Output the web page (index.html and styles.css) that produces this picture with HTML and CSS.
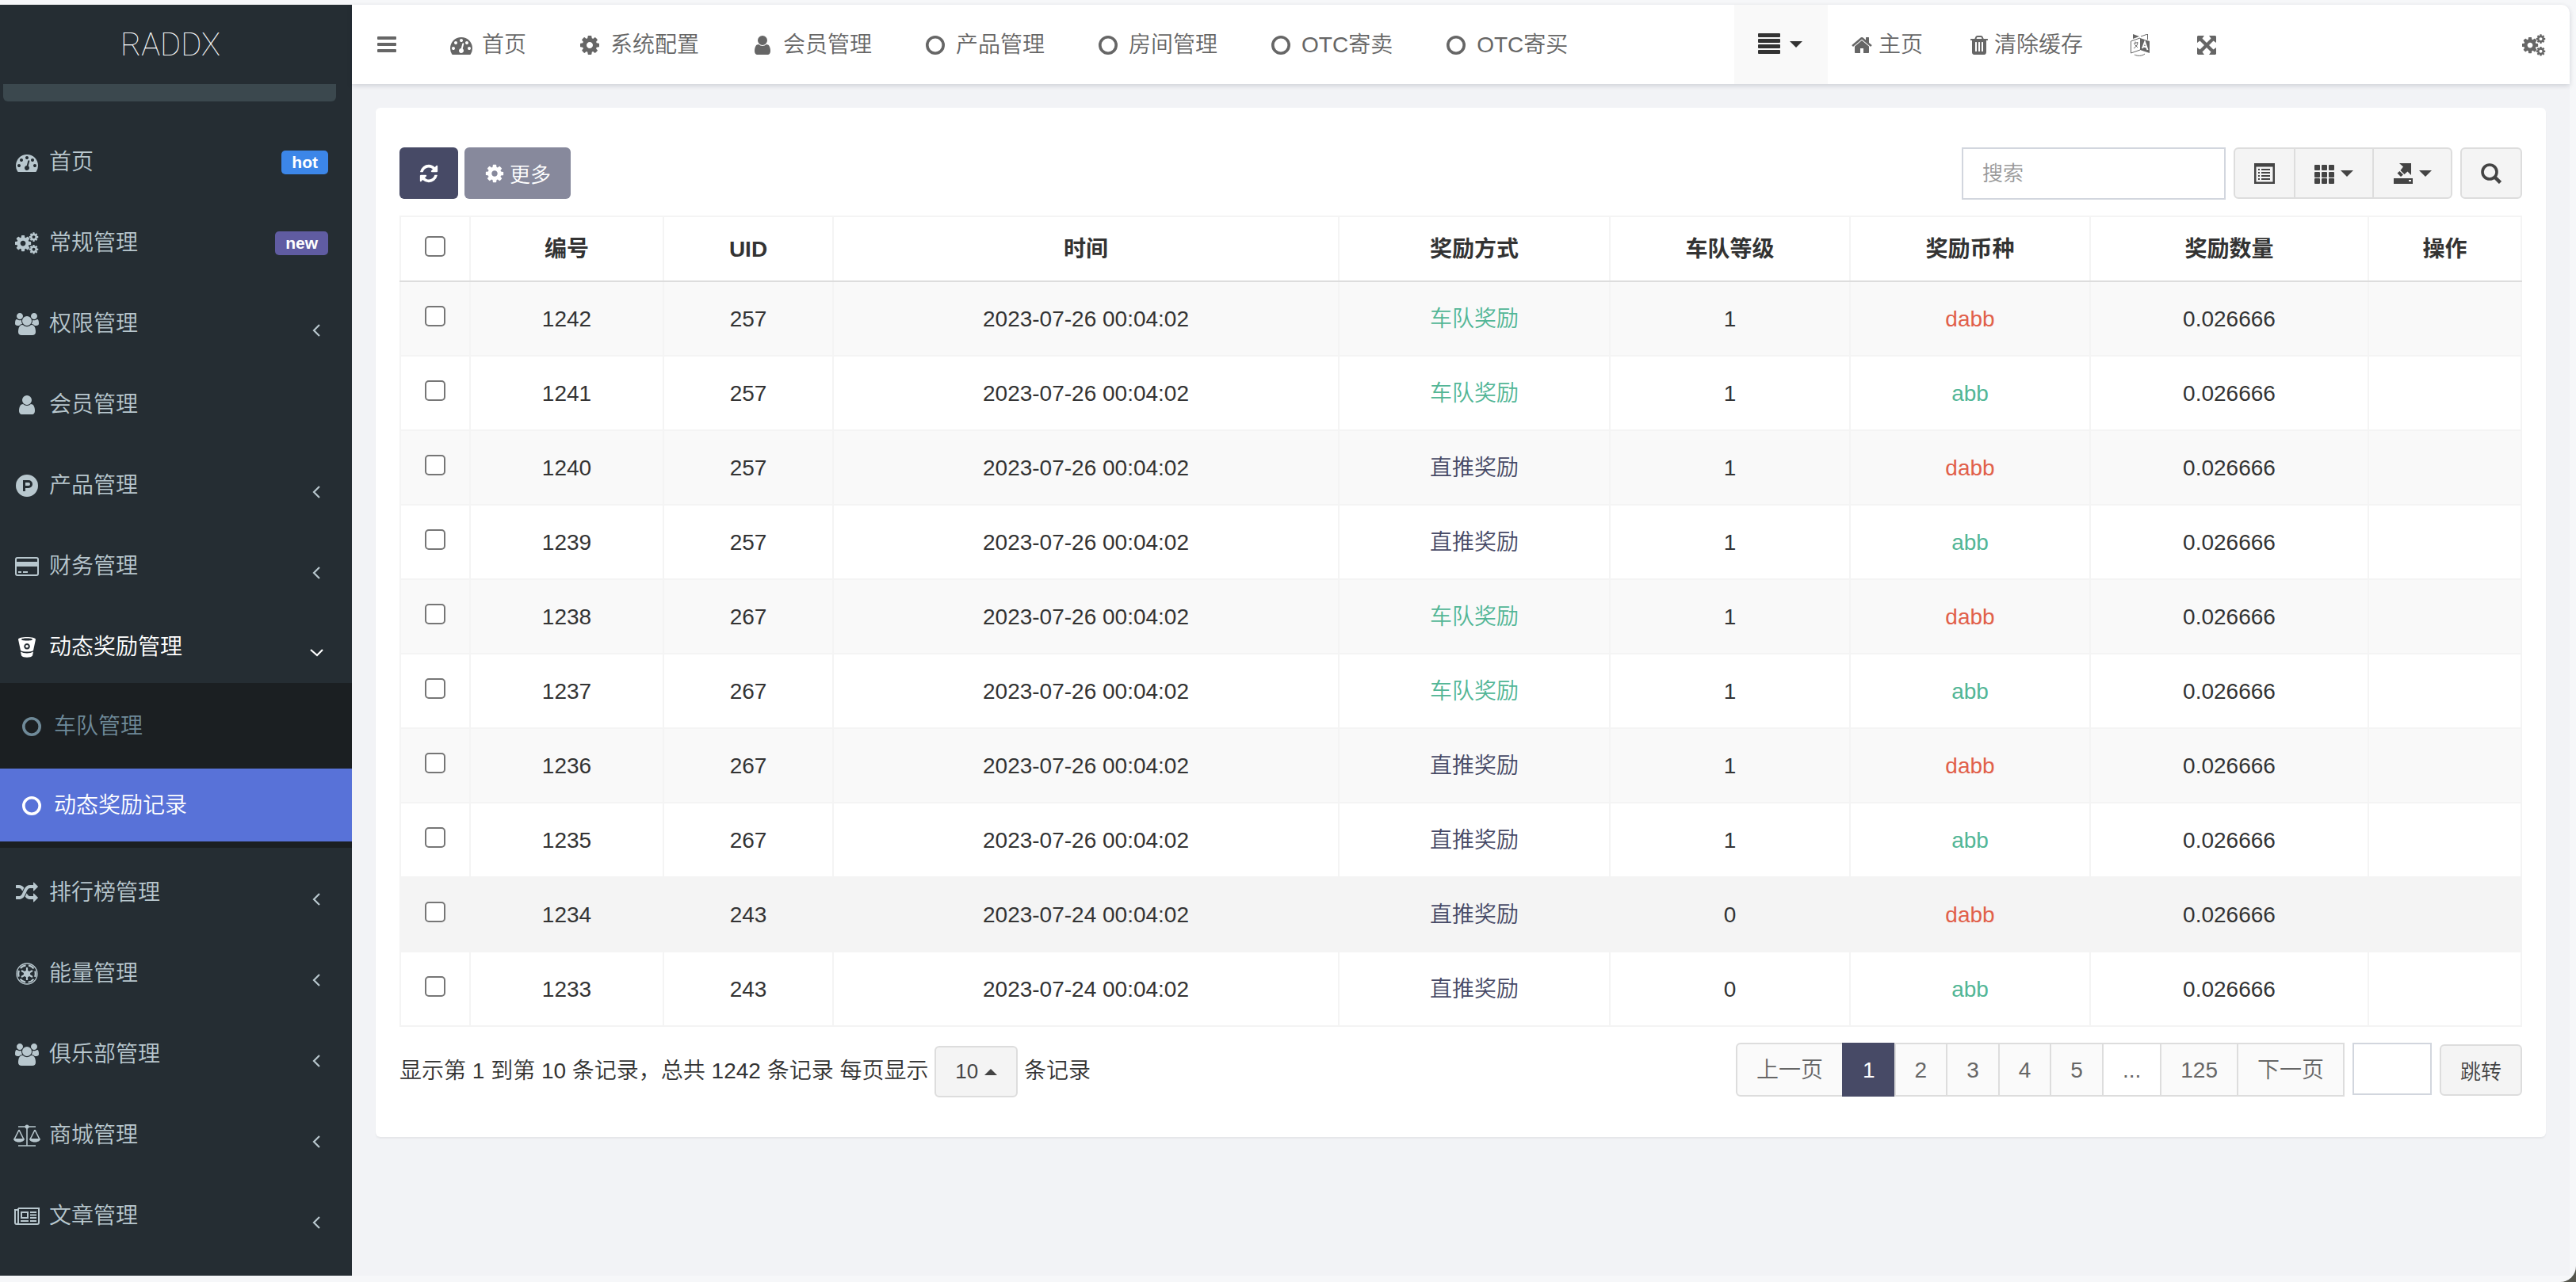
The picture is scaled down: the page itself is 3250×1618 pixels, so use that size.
FILE: index.html
```html
<!DOCTYPE html>
<html lang="zh-CN">
<head>
<meta charset="utf-8">
<title>RADDX</title>
<link rel="stylesheet" href="styles.css">
</head>
<body>
<svg class="sprite" aria-hidden="true">
  <symbol id="dash" viewBox="0 0 1792 1792"><path d="M384 1152q0-53-37.500-90.500t-90.500-37.500-90.500 37.500-37.500 90.500 37.500 90.500 90.500 37.500 90.500-37.500 37.500-90.500zm192-448q0-53-37.500-90.500t-90.500-37.500-90.500 37.500-37.500 90.500 37.500 90.500 90.500 37.500 90.500-37.500 37.500-90.500zm428 481l101-382q6-26-7.500-48.500t-38.500-29.500-48 6.500-30 39.500l-101 382q-60 5-107 43.500t-63 98.500q-20 77 20 146t117 89 146-20 89-117q16-60-6-117t-72-91zm660-33q0-53-37.500-90.500t-90.500-37.500-90.500 37.500-37.500 90.500 37.500 90.500 90.500 37.500 90.500-37.500 37.500-90.500zm-640-640q0-53-37.500-90.500t-90.500-37.500-90.500 37.500-37.500 90.500 37.500 90.500 90.500 37.500 90.500-37.500 37.500-90.500zm448 192q0-53-37.500-90.500t-90.500-37.500-90.500 37.500-37.500 90.500 37.500 90.500 90.500 37.500 90.500-37.500 37.500-90.500zm320 448q0 261-141 483-19 29-54 29h-1402q-35 0-54-29-141-221-141-483 0-182 71-348t191-286 286-191 348-71 348 71 286 191 191 286 71 348z"/></symbol>
  <symbol id="cog" viewBox="0 0 1792 1792"><path id="cog-shape" d="M1152 896q0-106-75-181t-181-75-181 75-75 181 75 181 181 75 181-75 75-181zm512-109v222q0 12-8 23t-20 13l-185 28q-19 54-39 91 35 50 107 138 10 12 10 25t-9 23q-27 37-99 108t-94 71q-12 0-26-9l-138-108q-44 23-91 38-16 136-29 186-7 28-36 28h-222q-14 0-24.500-8.500t-11.500-21.500l-28-184q-49-16-90-37l-141 107q-10 9-25 9-14 0-25-11-126-114-165-168-7-10-7-23 0-12 8-23 15-21 51-66.500t54-70.500q-27-50-41-99l-183-27q-13-2-21-12.500t-8-23.500v-222q0-12 8-23t19-13l186-28q14-46 39-92-40-57-107-138-10-12-10-24 0-10 9-23 26-36 98.500-107.500t94.500-71.500q13 0 26 10l138 107q44-23 91-38 16-136 29-186 7-28 36-28h222q14 0 24.500 8.500t11.500 21.500l28 184q49 16 90 37l142-107q9-9 24-9 13 0 25 10 129 119 165 170 7 8 7 22 0 12-8 23-15 21-51 66.500t-54 70.500q26 50 41 98l183 28q13 2 21 12.500t8 23.500z"/></symbol>
  <symbol id="cogs" viewBox="0 0 30 28"><use href="#cog-shape" transform="translate(-1.800 2.200) scale(.0132)"/><use href="#cog-shape" transform="translate(16.800 -.6) scale(.0075)"/><use href="#cog-shape" transform="translate(16.800 15) scale(.0075)"/></symbol>
  <symbol id="user" viewBox="0 0 1792 1792"><path d="M1536 1399q0 109-62.500 187t-150.500 78h-854q-88 0-150.500-78t-62.500-187q0-85 8.500-160.500t31.500-152 58.500-131 94-89 134.500-34.500q131 128 313 128t313-128q76 0 134.500 34.500t94 89 58.500 131 31.500 152 8.500 160.500zm-256-887q0 159-112.500 271.500t-271.500 112.500-271.500-112.500-112.500-271.500 112.500-271.500 271.500-112.500 271.500 112.500 112.500 271.500z"/></symbol>
  <symbol id="group" viewBox="-64 0 1920 1792"><path d="M529 896q-162 5-265 128h-134q-82 0-138-40.500t-56-118.500q0-353 124-353 6 0 43.500 21t97.500 42.500 119 21.500q67 0 133-23-5 37-5 66 0 139 81 256zm1071 637q0 120-73 189.500t-194 69.500h-874q-121 0-194-69.500t-73-189.500q0-53 3.500-103.500t14-109 26.500-108.500 43-97.500 62-81 85.500-53.500 111.500-20q10 0 43 21.500t73 48 107 48 135 21.500 135-21.500 107-48 73-48 43-21.500q61 0 111.500 20t85.500 53.500 62 81 43 97.500 26.500 108.500 14 109 3.500 103.500zm-1024-1277q0 106-75 181t-181 75-181-75-75-181 75-181 181-75 181 75 75 181zm704 384q0 159-112.500 271.500t-271.500 112.500-271.500-112.500-112.500-271.500 112.500-271.500 271.500-112.500 271.500 112.500 112.500 271.500zm576 225q0 78-56 118.500t-138 40.500h-134q-103-123-265-128 81-117 81-256 0-29-5-66 66 23 133 23 59 0 119-21.500t97.500-42.500 43.500-21q124 0 124 353zm-128-609q0 106-75 181t-181 75-181-75-75-181 75-181 181-75 181 75 75 181z"/></symbol>
  <symbol id="home" viewBox="64 0 1664 1792"><path d="M1472 992v480q0 26-19 45t-45 19h-384v-384h-256v384h-384q-26 0-45-19t-19-45v-480q0-1 .5-3t.5-3l575-474 575 474q1 2 1 6zm223-69l-62 74q-8 9-21 11h-3q-13 0-21-7l-692-577-692 577q-12 8-24 7-13-2-21-11l-62-74q-8-10-7-23.500t11-21.500l719-599q32-26 76-26t76 26l244 204v-195q0-14 9-23t23-9h192q14 0 23 9t9 23v408l219 182q10 8 11 21.500t-7 23.500z"/></symbol>
  <symbol id="trash" viewBox="192 0 1408 1792"><path d="M704 1376v-704q0-14-9-23t-23-9h-64q-14 0-23 9t-9 23v704q0 14 9 23t23 9h64q14 0 23-9t9-23zm256 0v-704q0-14-9-23t-23-9h-64q-14 0-23 9t-9 23v704q0 14 9 23t23 9h64q14 0 23-9t9-23zm256 0v-704q0-14-9-23t-23-9h-64q-14 0-23 9t-9 23v704q0 14 9 23t23 9h64q14 0 23-9t9-23zm-544-992h448l-48-117q-7-9-17-11h-317q-10 2-17 11zm928 32v64q0 14-9 23t-23 9h-96v948q0 83-47 143.500t-113 60.500h-832q-66 0-113-58.500t-47-141.500v-952h-96q-14 0-23-9t-9-23v-64q0-14 9-23t23-9h309l70-167q15-37 54-63t79-26h320q40 0 79 26t54 63l70 167h309q14 0 23 9t9 23z"/></symbol>
  <symbol id="refresh" viewBox="0 0 1792 1792"><path d="M1639 1056q0 5-1 7-64 268-268 434.500t-478 166.500q-146 0-282.500-55t-243.500-157l-129 129q-19 19-45 19t-45-19-19-45v-448q0-26 19-45t45-19h448q26 0 45 19t19 45-19 45l-137 137q71 66 161 102t187 36q134 0 250-65t186-179q11-17 53-117 8-23 30-23h192q13 0 22.500 9.500t9.500 22.500zm25-800v448q0 26-19 45t-45 19h-448q-26 0-45-19t-19-45 19-45l138-138q-148-137-349-137-134 0-250 65t-186 179q-11 17-53 117-8 23-30 23h-199q-13 0-22.500-9.500t-9.500-22.500v-7q65-268 270-434.500t480-166.500q146 0 284 55.500t245 156.500l130-129q19-19 45-19t45 19 19 45z"/></symbol>
  <symbol id="random" viewBox="0 0 1792 1792"><path d="M666 481q-60 92-137 273-22-45-37-72.500t-40.500-63.500-51-56.500-63-35-81.500-14.500h-224q-14 0-23-9t-9-23v-192q0-14 9-23t23-9h224q250 0 410 225zm1126 799q0 14-9 23l-320 320q-9 9-23 9-13 0-22.500-9.500t-9.500-22.500v-192q-32 0-85 .5t-81 1-73-1-71-5-64-10.500-63-18.500-58-28.500-59-40-55-53.500-56-69.500q59-93 136-273 22 45 37 72.500t40.500 63.500 51 56.500 63 35 81.500 14.500h256v-192q0-14 9-23t23-9q12 0 24 10l319 319q9 9 9 23zm0-896q0 14-9 23l-320 320q-9 9-23 9-13 0-22.500-9.500t-9.500-22.500v-192h-256q-48 0-87 15t-69 45-51 61.500-45 77.500q-32 62-78 171-29 66-49.500 111t-54 105-64 100-74 83-90 68.500-106.500 42-128 16.500h-224q-14 0-23-9t-9-23v-192q0-14 9-23t23-9h224q48 0 87-15t69-45 51-61.500 45-77.500q32-62 78-171 29-66 49.500-111t54-105 64-100 74-83 90-68.500 106.500-42 128-16.500h256v-192q0-14 9-23t23-9q12 0 24 10l319 319q9 9 9 23z"/></symbol>
  <symbol id="ring" viewBox="0 0 28 28"><circle cx="14" cy="14" r="10.200" fill="none" stroke="currentColor" stroke-width="3.600"/></symbol>
  <symbol id="product" viewBox="0 0 28 28"><path fill-rule="evenodd" d="M14 0a14 14 0 1 0 0 28a14 14 0 1 0 0-28zM9 7h7a5 5 0 0 1 0 10h-4v4h-3zM12 10v4h4a2 2 0 0 0 0-4z"/></symbol>
  <symbol id="card" viewBox="0 0 30 28"><path fill-rule="evenodd" d="M3 2h24a3 3 0 0 1 3 3v18a3 3 0 0 1-3 3h-24a3 3 0 0 1-3-3v-18a3 3 0 0 1 3-3zM3 4a1 1 0 0 0-1 1v3h26v-3a1 1 0 0 0-1-1zM2 14v9a1 1 0 0 0 1 1h24a1 1 0 0 0 1-1v-9zM4 20h4v2h-4zM10 20h6v2h-6z"/></symbol>
  <symbol id="bucket" viewBox="0 0 28 28"><path fill-rule="evenodd" d="M3 4c0-4 22-4 22 0l-3 14c-3 2-13 2-16 0zM7 4c0 2 14 2 14 0s-14-2-14 0zM14 9a3.800 3.800 0 1 0 .1 0z"/><circle cx="14" cy="12.800" r="1.800"/><path d="M6 19.500c4 2.500 12 2.500 16 0l-1 5c-2 3-12 3-14 0z"/></symbol>
  <symbol id="empire" viewBox="0 0 28 28"><circle cx="14" cy="14" r="13" fill="none" stroke="currentColor" stroke-width="1.300"/><circle cx="14" cy="14" r="10.800" fill="none" stroke="currentColor" stroke-width="2.200" stroke-dasharray="7.800 3.500" stroke-dashoffset="3.900"/><circle cx="14" cy="14" r="4.200"/><path d="M14 6v16M7 10l14 8M7 18l14-8" stroke="currentColor" stroke-width="2.200"/></symbol>
  <symbol id="scales" viewBox="0 0 34 28"><path d="M6 3h22M6 27h22M17 3v24M7 7l-6 12M7 7l6 12M27 7l-6 12M27 7l6 12" fill="none" stroke="currentColor" stroke-width="1.600"/><circle cx="17" cy="3" r="2.500"/><path d="M0 18h14c0 6-14 6-14 0zM20 18h14c0 6-14 6-14 0z"/></symbol>
  <symbol id="news" viewBox="0 0 32 28"><path d="M5 4h26v18a2 2 0 0 1-2 2h-26a2 2 0 0 1-2-2v-16h4M5 4v18a2 2 0 0 1-2 2M9 9h8v7h-8zM20 9h8M20 12.500h8M20 16h8M8 20h10M20 20h8" fill="none" stroke="currentColor" stroke-width="2"/></symbol>
  <symbol id="left" viewBox="0 0 30 40"><path d="M19 21l-7 7 7 7" fill="none" stroke="currentColor" stroke-width="2.200"/></symbol>
  <symbol id="down" viewBox="0 0 30 40"><path d="M8 23l8 7 7-7" fill="none" stroke="currentColor" stroke-width="2.200"/></symbol>
  <symbol id="bars" viewBox="0 0 24 28"><rect y="4" width="24" height="4" rx="1"/><rect y="12" width="24" height="4" rx="1"/><rect y="20" width="24" height="4" rx="1"/></symbol>
  <symbol id="lines" viewBox="0 0 28 28"><rect width="28" height="5" rx="1"/><rect y="7" width="28" height="5" rx="1"/><rect y="14" width="28" height="5" rx="1"/><rect y="21" width="28" height="5" rx="1"/></symbol>
  <symbol id="lang" viewBox="0 0 24 28"><path d="M3 0l8 3-8 3zM12 5l12 4v15l-12-4z"/><path d="M12 5l-11.500 4v15l11.500-4M13 3l8.500-3v7M4 12l5-1.500c0 4-3 6-5 7.500M5 13l4 4M6 9.500v2M5 26c4 2 9 2 13-1" fill="none" stroke="currentColor"/><path d="M15 18l3-8 3.500 10M16 15.500l4 1" fill="none" stroke="#fff" stroke-width="2"/></symbol>
  <symbol id="expand" viewBox="0 0 24 28"><path d="M1 2h8l-2.500 3.500 5.500 5.500 5.500-5.500-2.500-3.500h8l1 1v8l-3.500-2.500-5.500 5.500 5.500 5.500 3.500-2.500v8l-1 1h-8l2.500-3.500-5.500-5.500-5.500 5.500 2.500 3.500h-8l-1-1v-8l3.500 2.500 5.500-5.500-5.500-5.500-3.500 2.500v-8z"/></symbol>
  <symbol id="list" viewBox="0 0 26 26"><path fill-rule="evenodd" d="M0 0h26v26h-26zM2.500 4.500v19h21v-19z"/><path d="M5 8h2M9 8h11M5 12h2M9 12h11M5 16h2M9 16h11M5 20h2M9 20h11" stroke="currentColor" stroke-width="2"/></symbol>
  <symbol id="grid" viewBox="0 0 26 26"><g id="grid-row"><rect y="2" width="7" height="7" rx="1"/><rect x="9" y="2" width="7" height="7" rx="1"/><rect x="18" y="2" width="7" height="7" rx="1"/></g><use href="#grid-row" y="9"/><use href="#grid-row" y="17"/></symbol>
  <symbol id="export" viewBox="0 0 26 26"><path d="M8 0h15v15l-4.500-4.500-4 3.500-5-5 3.500-4.500zM5.500 12.500l3-2.500 4.500 4.500-3 2.500z"/><path fill-rule="evenodd" d="M1 19h24v7h-24zM20 21v2h3v-2z"/></symbol>
  <symbol id="search" viewBox="0 0 26 26"><circle cx="11" cy="11" r="9" fill="none" stroke="currentColor" stroke-width="3.600"/><path d="M17 17l7.500 7.500" stroke="currentColor" stroke-width="4.500"/></symbol>
</svg>

<div class="app">
  <aside class="sidebar">
    <a class="logo" href="#">RADDX</a>
    <div class="user-panel"></div>
    <ul class="menu">
      <li><a href="#"><span class="icon"><svg><use href="#dash"/></svg></span>首页<span class="badge badge-blue">hot</span></a></li>
      <li><a href="#"><span class="icon"><svg class="w30"><use href="#cogs"/></svg></span>常规管理<span class="badge badge-purple">new</span></a></li>
      <li><a href="#"><span class="icon"><svg class="w30"><use href="#group"/></svg></span>权限管理<svg class="arrow"><use href="#left"/></svg></a></li>
      <li><a href="#"><span class="icon"><svg><use href="#user"/></svg></span>会员管理</a></li>
      <li><a href="#"><span class="icon"><svg><use href="#product"/></svg></span>产品管理<svg class="arrow"><use href="#left"/></svg></a></li>
      <li><a href="#"><span class="icon"><svg class="w30"><use href="#card"/></svg></span>财务管理<svg class="arrow"><use href="#left"/></svg></a></li>
      <li class="open"><a href="#"><span class="icon"><svg><use href="#bucket"/></svg></span>动态奖励管理<svg class="arrow"><use href="#down"/></svg></a>
        <ul class="submenu">
          <li><a href="#"><span class="icon"><svg><use href="#ring"/></svg></span>车队管理</a></li>
          <li><a class="current" href="#"><span class="icon"><svg><use href="#ring"/></svg></span>动态奖励记录</a></li>
        </ul>
      </li>
      <li><a href="#"><span class="icon"><svg><use href="#random"/></svg></span>排行榜管理<svg class="arrow"><use href="#left"/></svg></a></li>
      <li><a href="#"><span class="icon"><svg><use href="#empire"/></svg></span>能量管理<svg class="arrow"><use href="#left"/></svg></a></li>
      <li><a href="#"><span class="icon"><svg class="w30"><use href="#group"/></svg></span>俱乐部管理<svg class="arrow"><use href="#left"/></svg></a></li>
      <li><a href="#"><span class="icon"><svg class="w34"><use href="#scales"/></svg></span>商城管理<svg class="arrow"><use href="#left"/></svg></a></li>
      <li><a href="#"><span class="icon"><svg class="w32"><use href="#news"/></svg></span>文章管理<svg class="arrow"><use href="#left"/></svg></a></li>
    </ul>
  </aside>

  <div class="main">
    <header class="topbar">
      <button class="toggle" type="button" aria-label="切换菜单"><svg class="w24"><use href="#bars"/></svg></button>
      <nav class="tabs">
        <a href="#"><span class="icon"><svg><use href="#dash"/></svg></span>首页</a>
        <a href="#"><span class="icon"><svg><use href="#cog"/></svg></span>系统配置</a>
        <a href="#"><span class="icon"><svg><use href="#user"/></svg></span>会员管理</a>
        <a href="#"><span class="icon"><svg><use href="#ring"/></svg></span>产品管理</a>
        <a href="#"><span class="icon"><svg><use href="#ring"/></svg></span>房间管理</a>
        <a href="#"><span class="icon"><svg><use href="#ring"/></svg></span>OTC寄卖</a>
        <a href="#"><span class="icon"><svg><use href="#ring"/></svg></span>OTC寄买</a>
      </nav>
      <div class="tools">
        <button class="more-tabs" type="button" aria-label="更多标签"><svg><use href="#lines"/></svg><i class="caret"></i></button>
        <a href="#"><svg class="w26"><use href="#home"/></svg>主页</a>
        <a href="#"><svg class="w22"><use href="#trash"/></svg>清除缓存</a>
        <a href="#" aria-label="语言"><svg class="w24"><use href="#lang"/></svg></a>
        <a href="#" aria-label="全屏"><svg class="w24"><use href="#expand"/></svg></a>
        <a class="settings" href="#" aria-label="设置"><svg class="w30"><use href="#cogs"/></svg></a>
      </div>
    </header>

    <main class="content">
      <section class="card">
        <div class="toolbar">
          <button class="btn btn-primary" type="button" aria-label="刷新"><svg class="s26"><use href="#refresh"/></svg></button>
          <button class="btn btn-primary btn-muted" type="button"><svg class="s26"><use href="#cog"/></svg>更多</button>
          <input class="search" type="text" placeholder="搜索" aria-label="搜索">
          <div class="btn-group">
            <button class="btn" type="button" aria-label="切换视图"><svg class="s26"><use href="#list"/></svg></button>
            <button class="btn" type="button" aria-label="列"><svg class="s26"><use href="#grid"/></svg><i class="caret"></i></button>
            <button class="btn" type="button" aria-label="导出"><svg class="s26"><use href="#export"/></svg><i class="caret"></i></button>
          </div>
          <button class="btn" type="button" aria-label="普通搜索"><svg class="s26"><use href="#search"/></svg></button>
        </div>

        <table class="records">
          <colgroup><col class="c-check"><col class="c-id"><col class="c-uid"><col><col class="c-type"><col class="c-level"><col class="c-level"><col class="c-amount"><col class="c-action"></colgroup>
          <thead>
            <tr><th><input type="checkbox" aria-label="全选"></th><th>编号</th><th>UID</th><th>时间</th><th>奖励方式</th><th>车队等级</th><th>奖励币种</th><th>奖励数量</th><th>操作</th></tr>
          </thead>
          <tbody>
            <tr><td><input type="checkbox" aria-label="选择 1242"></td><td>1242</td><td>257</td><td>2023-07-26 00:04:02</td><td class="green">车队奖励</td><td>1</td><td class="red">dabb</td><td>0.026666</td><td></td></tr>
            <tr><td><input type="checkbox" aria-label="选择 1241"></td><td>1241</td><td>257</td><td>2023-07-26 00:04:02</td><td class="green">车队奖励</td><td>1</td><td class="green">abb</td><td>0.026666</td><td></td></tr>
            <tr><td><input type="checkbox" aria-label="选择 1240"></td><td>1240</td><td>257</td><td>2023-07-26 00:04:02</td><td class="navy">直推奖励</td><td>1</td><td class="red">dabb</td><td>0.026666</td><td></td></tr>
            <tr><td><input type="checkbox" aria-label="选择 1239"></td><td>1239</td><td>257</td><td>2023-07-26 00:04:02</td><td class="navy">直推奖励</td><td>1</td><td class="green">abb</td><td>0.026666</td><td></td></tr>
            <tr><td><input type="checkbox" aria-label="选择 1238"></td><td>1238</td><td>267</td><td>2023-07-26 00:04:02</td><td class="green">车队奖励</td><td>1</td><td class="red">dabb</td><td>0.026666</td><td></td></tr>
            <tr><td><input type="checkbox" aria-label="选择 1237"></td><td>1237</td><td>267</td><td>2023-07-26 00:04:02</td><td class="green">车队奖励</td><td>1</td><td class="green">abb</td><td>0.026666</td><td></td></tr>
            <tr><td><input type="checkbox" aria-label="选择 1236"></td><td>1236</td><td>267</td><td>2023-07-26 00:04:02</td><td class="navy">直推奖励</td><td>1</td><td class="red">dabb</td><td>0.026666</td><td></td></tr>
            <tr><td><input type="checkbox" aria-label="选择 1235"></td><td>1235</td><td>267</td><td>2023-07-26 00:04:02</td><td class="navy">直推奖励</td><td>1</td><td class="green">abb</td><td>0.026666</td><td></td></tr>
            <tr class="hovered"><td><input type="checkbox" aria-label="选择 1234"></td><td>1234</td><td>243</td><td>2023-07-24 00:04:02</td><td class="navy">直推奖励</td><td>0</td><td class="red">dabb</td><td>0.026666</td><td></td></tr>
            <tr><td><input type="checkbox" aria-label="选择 1233"></td><td>1233</td><td>243</td><td>2023-07-24 00:04:02</td><td class="navy">直推奖励</td><td>0</td><td class="green">abb</td><td>0.026666</td><td></td></tr>
          </tbody>
        </table>

        <div class="table-footer">
          <div class="summary">显示第 1 到第 10 条记录，总共 1242 条记录 每页显示 <button class="btn page-size" type="button">10<i class="caret caret-up"></i></button> 条记录</div>
          <ul class="pagination">
            <li><a href="#">上一页</a></li>
            <li><a class="active" href="#">1</a></li>
            <li><a href="#">2</a></li>
            <li><a href="#">3</a></li>
            <li><a href="#">4</a></li>
            <li><a href="#">5</a></li>
            <li><a class="dots" href="#">...</a></li>
            <li><a href="#">125</a></li>
            <li><a href="#">下一页</a></li>
          </ul>
          <input class="jump" type="text" aria-label="页码">
          <button class="btn" type="button">跳转</button>
        </div>
      </section>
    </main>
  </div>
</div>
</body>
</html>
```
FILE: styles.css
```css
* { box-sizing: border-box; }

body {
  margin: 0;
  background: #55564e;
  color: #333;
  font: 350 28px/40px "Liberation Sans", "Noto Sans CJK SC", sans-serif;
}

a { color: inherit; text-decoration: none; }
ul { list-style: none; margin: 0; padding: 0; }
button, input { font-family: inherit; font-weight: inherit; margin: 0; }
svg { display: block; flex: none; width: 28px; height: 28px; fill: currentColor; }

.sprite { position: absolute; width: 0; height: 0; }
.w22 { width: 22px; }
.w24 { width: 24px; }
.w26 { width: 26px; }
.w30 { width: 30px; }
.w32 { width: 32px; }
.w34 { width: 34px; }
.s26 { width: 26px; height: 26px; }

.icon { display: flex; flex: none; justify-content: center; width: 36px; }

.caret {
  border: 8px solid transparent;
  border-top-color: currentColor;
  border-bottom: 0;
}
.caret-up {
  border-top: 0;
  border-bottom: 8px solid currentColor;
}

.app {
  display: flex;
  min-height: 100vh;
  padding: 6px 8px 8px 0;
  background: #f6f7f9;
  border-bottom-right-radius: 20px;
}

/* sidebar */
.sidebar { flex: none; width: 444px; background: #252d33; color: #b8c7ce; }

.logo {
  display: block;
  height: 100px;
  padding-right: 14px;
  color: #fff;
  font: 100 40px/102px Roboto, "Liberation Sans", sans-serif;
  text-align: center;
}

.user-panel {
  height: 22px;
  margin: 0 20px 30px 4px;
  background: #3b484e;
  border-radius: 0 0 6px 6px;
}

.menu > li { margin-bottom: 10px; }
.menu a {
  display: flex;
  align-items: center;
  gap: 10px;
  height: 92px;
  padding: 2px 30px 0 16px;
}
.menu .open > a { color: #fff; }

.arrow { width: 30px; height: 40px; margin-left: auto; }

.badge {
  margin-left: auto;
  padding: 0 13px;
  border-radius: 5px;
  color: #fff;
  font-size: 21px;
  font-weight: bold;
  line-height: 30px;
}
.badge-blue { background: #3c86e8; }
.badge-purple { background: #605ca2; }

.submenu {
  display: grid;
  gap: 8px;
  padding: 8px 0;
  background: #1b1f22;
  color: #6f8a99;
}
.submenu a { padding-left: 22px; }
.submenu .current { background: #5872d8; color: #fff; }

/* main column */
.main { display: flex; flex: 1; flex-direction: column; min-width: 0; background: #f2f3f6; border-top-right-radius: 10px; }

.topbar {
  display: flex;
  align-items: center;
  height: 100px;
  background: #fff;
  border-top-right-radius: 10px;
  box-shadow: 0 2px 6px rgba(0, 21, 41, .16);
  color: #666;
}

.toggle {
  padding: 0 32px;
  border: 0;
  background: none;
  color: inherit;
}

.tabs { display: flex; gap: 62px; margin: 0 auto 0 32px; white-space: nowrap; }
.tabs a { display: flex; align-items: center; gap: 8px; padding-top: 2px; }

.tools {
  display: flex;
  flex: 0 0 1054px;
  align-items: center;
  gap: 60px;
  padding-right: 30px;
}
.tools a { display: flex; align-items: center; gap: 8px; padding-top: 2px; white-space: nowrap; }
.tools .settings { margin-left: auto; }

.more-tabs {
  display: flex;
  align-items: center;
  gap: 12px;
  height: 100px;
  margin-right: -30px;
  padding: 0 32px 0 30px;
  border: 0;
  background: #f9f9f9;
  color: #333;
}

.content { padding: 30px; }

.card {
  padding: 50px 30px;
  background: #fff;
  border-radius: 6px;
  box-shadow: 0 2px 2px rgba(0, 0, 0, .05);
}

/* buttons and fields */
.btn {
  display: flex;
  align-items: center;
  justify-content: center;
  gap: 8px;
  height: 65px;
  padding: 0 24px;
  border: 2px solid #ddd;
  border-radius: 6px;
  background: #f4f4f4;
  color: #444;
  font-size: 26px;
}
.btn-primary { border: 0; background: #474a66; color: #fff; }
.btn-muted { gap: 6px; padding: 0 25px; background: #87899c; }

.btn-group { display: flex; }
.btn-group .btn { gap: 7px; }
.btn-group .btn + .btn { margin-left: -2px; }
.btn-group .btn:not(:last-child) { border-top-right-radius: 0; border-bottom-right-radius: 0; }
.btn-group .btn:not(:first-child) { border-top-left-radius: 0; border-bottom-left-radius: 0; }

.search, .jump {
  height: 66px;
  padding: 0 24px;
  border: 2px solid #d2d6de;
  background: #fff;
  color: #333;
  font-size: 26px;
}
.search::placeholder { color: #999; }

.toolbar { display: flex; align-items: flex-start; gap: 8px; }
.search { width: 333px; margin-left: auto; }
.toolbar .btn-group { margin: 0 2px; }

/* records table */
.records {
  width: 100%;
  margin-top: 20px;
  border-collapse: collapse;
  table-layout: fixed;
}
.c-check { width: 88px; }
.c-id { width: 244px; }
.c-uid { width: 214px; }
.c-type { width: 342px; }
.c-level { width: 303px; }
.c-amount { width: 351px; }
.c-action { width: 193px; }

.records th, .records td {
  padding: 2px 0 0;
  border: 2px solid #f4f4f4;
  text-align: center;
  vertical-align: middle;
}
.records th { height: 82px; border-bottom-color: #ddd; }
.records td { height: 94px; }
.records tbody tr:nth-child(odd) { background: #f9f9f9; }
.records tbody tr.hovered:nth-child(n) { background: #f4f4f4; }

.records input {
  display: block;
  width: 26px;
  height: 26px;
  margin: 0 auto 8px;
  border: 2px solid #767676;
  border-radius: 5px;
  background: #fff;
  appearance: none;
}

.green { color: #52b696; }
.red { color: #e1604a; }
.navy { color: #474a66; }

/* footer */
.table-footer { display: flex; align-items: flex-start; gap: 10px; margin-top: 20px; }
.summary { margin: 4px auto 0 0; }
.page-size { display: inline-flex; }

.pagination { display: flex; }
.pagination li + li { margin-left: -2px; }
.pagination a {
  display: block;
  padding: 13px 24px 11px;
  border: 2px solid #ddd;
  background: #fafafa;
  color: #666;
}
.pagination li:first-child a { border-radius: 6px 0 0 6px; }
.pagination .active { border-color: #474a66; background: #474a66; color: #fff; }
.pagination .dots { background: #fff; }

.jump { width: 100px; }
.table-footer > .btn { margin-top: 2px; }
```
